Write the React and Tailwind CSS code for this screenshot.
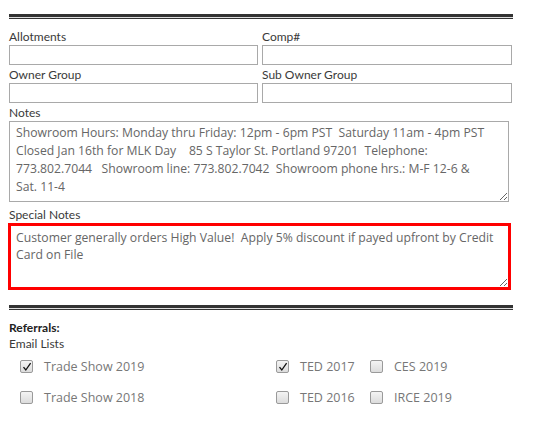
import React, { useState } from 'react';

const labelFont = { fontFamily: 'Lato, "Liberation Sans", sans-serif' };
const bodyFont = { fontFamily: '"Open Sans", "Liberation Sans", sans-serif' };

const notesText =
  'Showroom Hours: Monday thru Friday: 12pm - 6pm PST  Saturday 11am - 4pm PST\nClosed Jan 16th for MLK Day    85 S Taylor St. Portland 97201  Telephone:\n773.802.7044   Showroom line: 773.802.7042  Showroom phone hrs.: M-F 12-6 &\nSat. 11-4';

const specialText =
  'Customer generally orders High Value!  Apply 5% discount if payed upfront by Credit\nCard on File';

const DoubleLine = ({ className = '' }) => (
  <div className={`w-[504px] ${className}`}>
    <div className="h-[3px] bg-[#333]" />
    <div className="h-[1px] bg-[#ddd]" />
    <div className="h-[1px] bg-[#333]" />
  </div>
);

const Label = ({ children, className = '' }) => (
  <div className={`h-[14px] leading-[14px] text-[12px] text-[#3a3a3a] mb-[1px] ${className}`} style={labelFont}>
    {children}
  </div>
);

const Field = ({ label, className = '' }) => (
  <div className={className}>
    <Label>{label}</Label>
    <input className="block w-full h-[20px] border border-[#a9a9a9] outline-none" />
  </div>
);

const Check = ({ label, defaultChecked }) => {
  const [on, setOn] = useState(defaultChecked);
  return (
    <label className="flex items-center gap-[11px] cursor-pointer" onClick={() => setOn(!on)}>
      <span className="relative w-[13px] h-[13px] rounded-[2px] border border-[#9a9a9a] bg-gradient-to-b from-[#f4f4f4] to-[#dcdcdc]">
        {on && (
          <svg width="10" height="10" viewBox="0 0 10 10" className="absolute left-[1px] top-[1px]">
            <path d="M1.5 5.2 L3.8 8 L8.6 1.2" stroke="#111" strokeWidth="1.3" fill="none" />
          </svg>
        )}
      </span>
      <span className="text-[12.5px] text-[#777] leading-[18px]" style={bodyFont}>{label}</span>
    </label>
  );
};

const App = () => {
  return (
    <div className="w-[540px] h-[433px] bg-white pl-[9px] pt-[14px] overflow-hidden">
      <DoubleLine />

      <div className="grid grid-cols-[249px_250px] gap-x-[4px] mt-[11px]">
        <Field label="Allotments" />
        <Field label="Comp#" />
        <Field label="Owner Group" className="mt-[3px]" />
        <Field label="Sub Owner Group" className="mt-[3px]" />
      </div>

      <Label className="mt-[3px]">Notes</Label>
      <textarea
        wrap="off"
        defaultValue={notesText}
        className="block w-[500px] h-[81px] border border-[#a9a9a9] pl-[6px] pt-[2px] text-[12.2px] leading-[18px] text-[#666] overflow-hidden whitespace-pre outline-none"
        style={bodyFont}
      />

      <Label className="mt-[6px]">Special Notes</Label>
      <textarea
        wrap="off"
        defaultValue={specialText}
        className="block w-[503px] h-[67px] -ml-[1px] border-[3px] border-[#ff0000] pl-[5px] pt-[3px] text-[12.2px] leading-[17px] text-[#666] overflow-hidden whitespace-pre outline-none"
        style={bodyFont}
      />

      <DoubleLine className="mt-[15px]" />

      <div className="mt-[11px] h-[14px] leading-[14px] text-[12px] font-bold text-[#222]" style={labelFont}>
        Referrals:
      </div>
      <div className="mt-[2px] h-[14px] leading-[14px] text-[12px] text-[#3a3a3a]" style={labelFont}>
        Email Lists
      </div>

      <div className="ml-[11px] grid grid-cols-[256px_94px_1fr] auto-rows-[31px] items-center">
        <Check label="Trade Show 2019" defaultChecked />
        <Check label="TED 2017" defaultChecked />
        <Check label="CES 2019" />
        <Check label="Trade Show 2018" />
        <Check label="TED 2016" />
        <Check label="IRCE 2019" />
      </div>
    </div>
  );
};

export default App;
